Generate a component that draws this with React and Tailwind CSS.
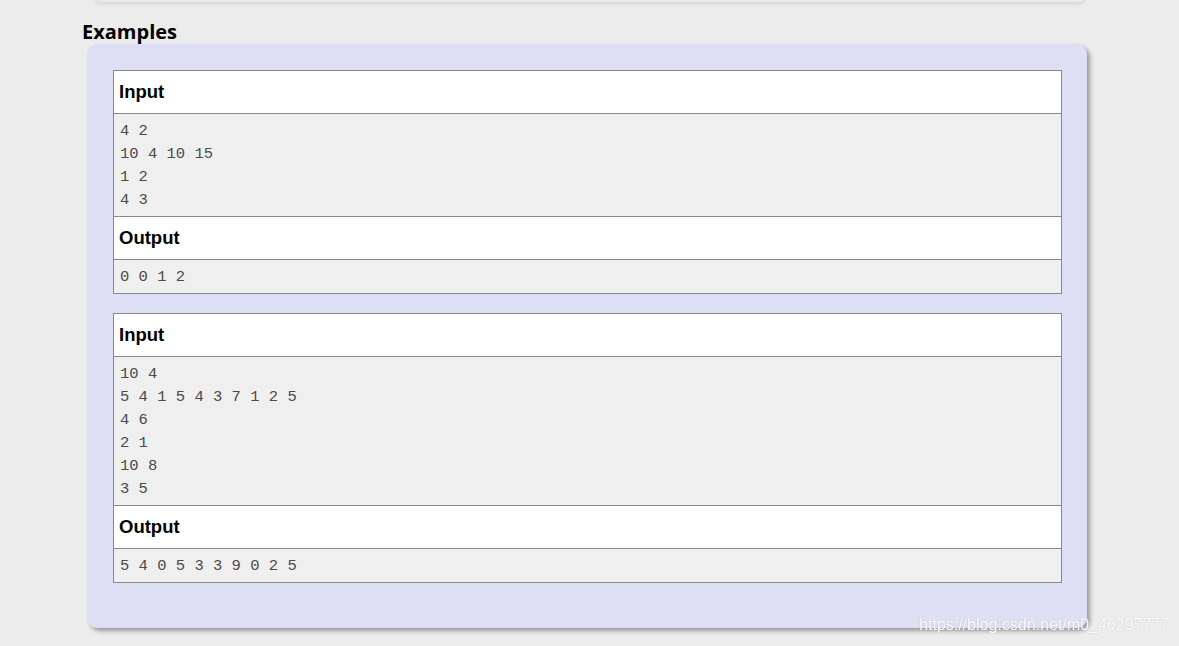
import React from 'react';

const examples = [
  { input: ['4 2', '10 4 10 15', '1 2', '4 3'], output: ['0 0 1 2'] },
  { input: ['10 4', '5 4 1 5 4 3 7 1 2 5', '4 6', '2 1', '10 8', '3 5'], output: ['5 4 0 5 3 3 9 0 2 5'] },
];

function Header({ children }) {
  return (
    <div className="h-[42px] flex items-center px-[5px] bg-white text-black text-[18.5px] font-bold font-['Liberation_Sans',Arial,sans-serif]">
      {children}
    </div>
  );
}

function Body({ lines }) {
  return (
    <div className="bg-[#efefef] px-[6px] pt-[6px] pb-[4px] font-['Liberation_Mono','Courier_New',monospace] text-[15.5px] leading-[23px] text-[#4a4a4a] whitespace-pre">
      {lines.map((l, i) => (
        <div key={i}>{l}</div>
      ))}
    </div>
  );
}

function Example({ input, output }) {
  return (
    <div className="border border-[#888] flex flex-col">
      <Header>Input</Header>
      <div className="border-t border-[#888]" />
      <Body lines={input} />
      <div className="border-t border-[#888]" />
      <Header>Output</Header>
      <div className="border-t border-[#888]" />
      <Body lines={output} />
    </div>
  );
}

export default function App() {
  return (
    <div className="relative w-full h-[646px] bg-[#ececec] overflow-hidden">
      {/* bottom edge of the section above */}
      <div className="absolute left-[95px] top-[-12px] w-[990px] h-[14px] bg-[#ececec] rounded-b-[6px] shadow-[0_2px_4px_rgba(0,0,0,0.1)]" />

      <div className="pl-[82px] pt-[20px]">
        <h2 className="text-[20px] leading-[24px] font-bold text-black font-['Open_Sans','Noto_Sans',sans-serif]">
          Examples
        </h2>
      </div>

      <div className="ml-[87px] w-[1000px] h-[584px] bg-[#dedef4] rounded-[10px] shadow-[3px_3px_4px_rgba(0,0,0,0.35)] pt-[26px] pl-[26px] pr-[25px] flex flex-col gap-[19px]">
        {examples.map((ex, i) => (
          <Example key={i} input={ex.input} output={ex.output} />
        ))}
      </div>

      <div className="absolute right-[10px] bottom-[9px] text-[16px] text-white font-['Liberation_Sans',Arial,sans-serif] [text-shadow:0_0_1px_rgba(0,0,0,0.25)]">
        https://blog.csdn.net/m0_46297777
      </div>
    </div>
  );
}
